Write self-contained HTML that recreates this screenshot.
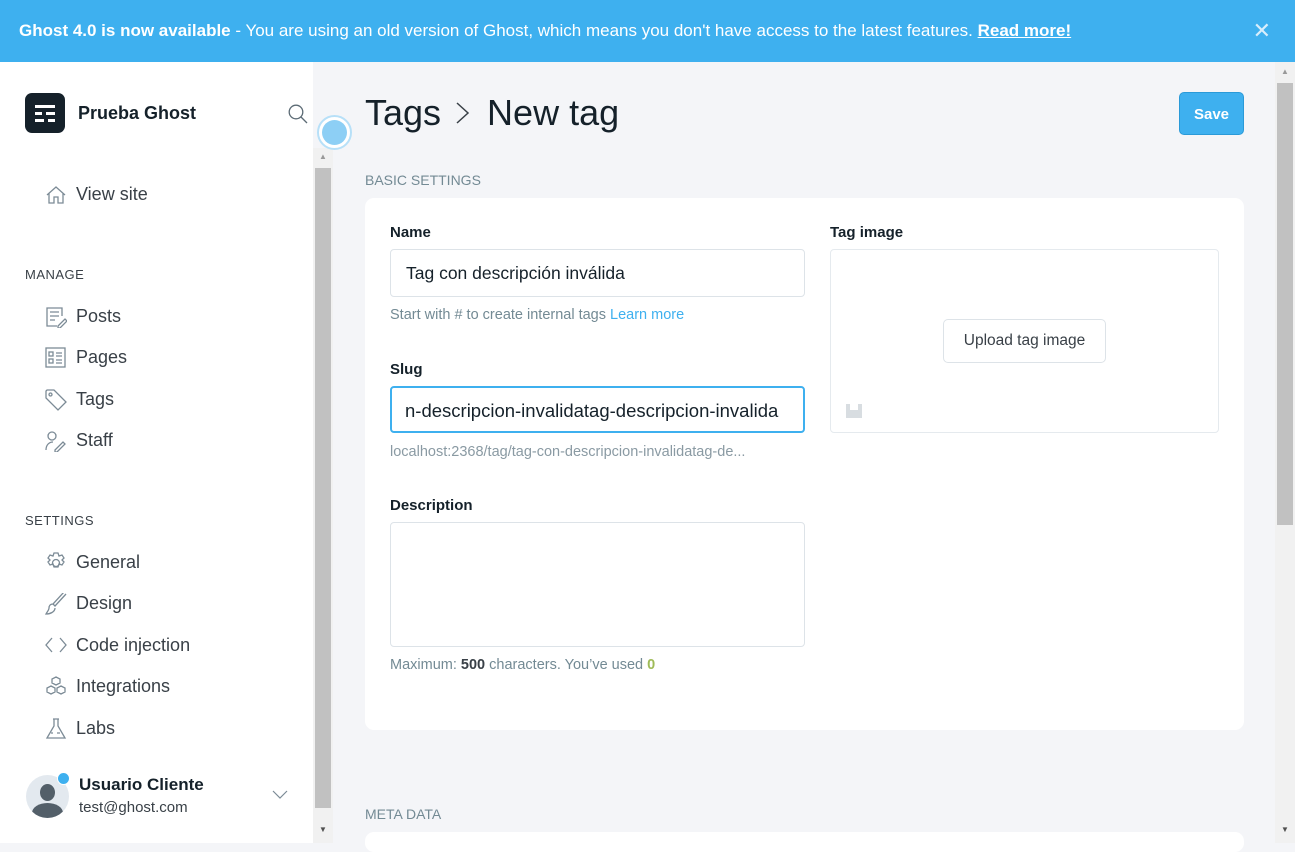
<!DOCTYPE html>
<html><head><meta charset="utf-8"><style>
*{box-sizing:border-box;margin:0;padding:0}
body{width:1295px;height:843px;overflow:hidden;font-family:"Liberation Sans",sans-serif;background:#f4f5f8;position:relative;color:#15212a}
.banner{position:absolute;left:0;top:0;width:1295px;height:62px;background:#3eb0ef;color:#fff;font-size:17px;line-height:62px;padding-left:19px}
.banner b{font-weight:bold}
.banner u{font-weight:bold}
.x{position:absolute;right:24px;top:0;font-size:22px;color:#d8eefc}
.side{position:absolute;left:0;top:62px;width:313px;height:781px;background:#fff}
.sb{position:absolute;left:313px;top:148px;width:20px;height:695px;background:#f1f1f1}
.sb div{position:absolute;left:2px;top:20px;width:16px;height:640px;background:#c1c1c1}
.logo{position:absolute;left:25px;top:93px;width:40px;height:40px;background:#15212a;border-radius:7px}
.logo i{position:absolute;height:3px;background:#fff}
.title{position:absolute;left:78px;top:103px;font-size:18px;font-weight:bold;color:#15212a}
.nav{position:absolute;left:76px;font-size:18px;color:#394047}
.ic{position:absolute;left:45px;width:22px;height:22px}
.hd{position:absolute;left:25px;font-size:13px;color:#394047;letter-spacing:.5px}
.main-h{position:absolute;left:365px;top:92px;font-size:36px;color:#15212a}
.save{position:absolute;left:1179px;top:92px;width:65px;height:43px;background:#3eb0ef;border:1px solid #2a9ad8;border-radius:5px;color:#fff;font-weight:bold;font-size:15px;text-align:center;line-height:43px}
.sec{position:absolute;left:365px;font-size:14px;color:#738a94}
.card{position:absolute;left:365px;top:198px;width:879px;height:532px;background:#fff;border-radius:9px}
.lbl{position:absolute;font-size:15px;font-weight:bold;color:#15212a}
.inp{position:absolute;border:1px solid #dde3e8;border-radius:4px;background:#fff;font-size:17.5px;color:#15212a;padding-left:15px}
.hint{position:absolute;font-size:14.5px;color:#738a94}
.rsb{position:absolute;left:1275px;top:62px;width:20px;height:781px;background:#f1f1f1}
.rsb div{position:absolute;left:2px;top:21px;width:16px;height:442px;background:#c1c1c1}
</style></head><body>
<div class="banner"><b>Ghost 4.0 is now available</b> - You are using an old version of Ghost, which means you don't have access to the latest features. <u>Read more!</u><span class="x">✕</span></div>
<div class="side"></div>
<div class="sb"><div></div><span style="position:absolute;left:6px;top:4px;font-size:8px;color:#999">▲</span><span style="position:absolute;left:6px;top:677px;font-size:8px;color:#505050">▼</span></div>
<div class="logo"><i style="left:10px;top:12px;width:20px"></i><i style="left:10px;top:19px;width:7px"></i><i style="left:21px;top:19px;width:9px"></i><i style="left:10px;top:26px;width:9px"></i><i style="left:23px;top:26px;width:7px"></i></div>
<div class="title">Prueba Ghost</div>
<svg style="position:absolute;left:288px;top:104px" width="20" height="20" fill="none" stroke="#5c6b75" stroke-width="1.3"><circle cx="8" cy="8" r="6.8"/><path d="M13 13L19 19"/></svg>
<div style="position:absolute;left:317px;top:115px;width:35px;height:35px;border-radius:50%;background:#fff;border:2px solid #b7e0f8"></div>
<div style="position:absolute;left:322px;top:120px;width:25px;height:25px;border-radius:50%;background:#8dcff5"></div>
<svg class="ic" style="top:184px" viewBox="0 0 22 22" fill="none" stroke="#7c8b96" stroke-width="1.3"><path d="M2 11L11 3l9 8M4 9v10h5v-6h4v6h5V9"/></svg>
<div class="nav" style="top:184px">View site</div>
<div class="hd" style="top:267px">MANAGE</div>
<svg class="ic" style="top:306px" viewBox="0 0 22 22" fill="none" stroke="#7c8b96" stroke-width="1.3"><path d="M12 20H2V2h15v8M5 6h9M5 10h9M5 14h5M13 20l7-7 2 2-7 7h-2z"/></svg>
<div class="nav" style="top:306px">Posts</div>
<svg class="ic" style="top:347px" viewBox="0 0 22 22" fill="none" stroke="#7c8b96" stroke-width="1.3"><rect x="1" y="1" width="19" height="19"/><rect x="4" y="5" width="4" height="4"/><rect x="4" y="12" width="4" height="4"/><path d="M11 6h6M11 9h6M11 13h6M11 16h6"/></svg>
<div class="nav" style="top:347px">Pages</div>
<svg class="ic" style="top:389px" viewBox="0 0 22 22" fill="none" stroke="#7c8b96" stroke-width="1.3"><path d="M1 2v7l12 12 8-8L9 1H2z"/><circle cx="5.5" cy="5.5" r="1.5"/></svg>
<div class="nav" style="top:389px">Tags</div>
<svg class="ic" style="top:430px" viewBox="0 0 22 22" fill="none" stroke="#7c8b96" stroke-width="1.3"><circle cx="7" cy="6" r="4"/><path d="M1 20c0-5 3-8 7-8M10 20l8-8 2 2-8 8h-2z"/></svg>
<div class="nav" style="top:430px">Staff</div>
<div class="hd" style="top:513px">SETTINGS</div>
<svg class="ic" style="top:552px" viewBox="0 0 22 22" fill="none" stroke="#7c8b96" stroke-width="1.3"><circle cx="11" cy="11" r="3.5"/><path d="M9 1h4l1 3 3-1 2 3-2 2 2 2-2 3-3-1-1 3H9l-1-3-3 1-2-3 2-2-2-2 2-3 3 1z"/></svg>
<div class="nav" style="top:552px">General</div>
<svg class="ic" style="top:593px" viewBox="0 0 22 22" fill="none" stroke="#7c8b96" stroke-width="1.3"><path d="M21 1L10 13l-2-2L19-1M8 11c-3 0-4 2-4 4s-2 4-3 6c4 0 9-2 9-6"/></svg>
<div class="nav" style="top:593px">Design</div>
<svg class="ic" style="top:635px" viewBox="0 0 22 22" fill="none" stroke="#7c8b96" stroke-width="1.3"><path d="M7 3L1 10l6 7M15 3l6 7-6 7"/></svg>
<div class="nav" style="top:635px">Code injection</div>
<svg class="ic" style="top:676px" viewBox="0 0 22 22" fill="none" stroke="#7c8b96" stroke-width="1.3"><path d="M11 1l4 2v4l-4 2-4-2V3zM6 10l4 2v4l-4 2-4-2v-4zM16 10l4 2v4l-4 2-4-2v-4z"/></svg>
<div class="nav" style="top:676px">Integrations</div>
<svg class="ic" style="top:718px" viewBox="0 0 22 22" fill="none" stroke="#7c8b96" stroke-width="1.3"><path d="M8 1h6M9 1v7L2 20h18L13 8V1M6 15h2M12 15h3"/></svg>
<div class="nav" style="top:718px">Labs</div>
<div style="position:absolute;left:26px;top:775px;width:43px;height:43px;border-radius:50%;background:#e3e9ef;overflow:hidden"><div style="position:absolute;left:14px;top:9px;width:15px;height:17px;border-radius:50%;background:#535f69"></div><div style="position:absolute;left:6px;top:28px;width:31px;height:20px;border-radius:50% 50% 0 0;background:#535f69"></div></div>
<div style="position:absolute;left:57px;top:772px;width:13px;height:13px;border-radius:50%;background:#3eb0ef;border:1px solid #fff"></div>
<div style="position:absolute;left:79px;top:775px;font-size:17px;font-weight:bold;color:#15212a">Usuario Cliente</div>
<div style="position:absolute;left:79px;top:799px;font-size:15px;color:#394047">test@ghost.com</div>
<svg style="position:absolute;left:272px;top:790px" width="16" height="10" fill="none" stroke="#7c8b96" stroke-width="1.2"><path d="M1 1l7 7 7-7"/></svg>
<div class="main-h">Tags<span style="display:inline-block;width:46px;position:relative"><svg style="position:absolute;left:14px;top:-24px" width="16" height="24" fill="none" stroke="#394047" stroke-width="1.5"><path d="M2 2l11 10-11 10"/></svg></span>New tag</div>
<div class="save">Save</div>
<div class="sec" style="top:172px">BASIC SETTINGS</div>
<div class="card"></div>
<div class="lbl" style="left:390px;top:224px">Name</div>
<div class="inp" style="left:390px;top:249px;width:415px;height:48px;line-height:46px">Tag con descripción inválida</div>
<div class="hint" style="left:390px;top:307px">Start with # to create internal tags <span style="color:#3eb0ef">Learn more</span></div>
<div class="lbl" style="left:390px;top:361px">Slug</div>
<div class="inp" style="left:390px;top:386px;width:415px;height:47px;line-height:45px;border:2px solid #3eb0ef;padding-left:13px;overflow:hidden;white-space:nowrap;font-size:18.5px">n-descripcion-invalidatag-descripcion-invalida</div>
<div class="hint" style="left:390px;top:444px;color:#8a9aa3">localhost:2368/tag/tag-con-descripcion-invalidatag-de...</div>
<div class="lbl" style="left:390px;top:497px">Description</div>
<div class="inp" style="left:390px;top:522px;width:415px;height:125px"></div>
<div class="hint" style="left:390px;top:657px">Maximum: <b style="color:#394047">500</b> characters. You’ve used <b style="color:#9fbb58">0</b></div>
<div class="lbl" style="left:830px;top:224px">Tag image</div>
<div style="position:absolute;left:830px;top:249px;width:389px;height:184px;border:1px solid #e5eaee;border-radius:4px"></div>
<div style="position:absolute;left:943px;top:319px;width:163px;height:44px;border:1px solid #dde3e8;border-radius:5px;background:#fff;font-size:15.5px;color:#394047;text-align:center;line-height:42px">Upload tag image</div>
<div style="position:absolute;left:846px;top:404px;width:16px;height:14px;background:#d8dde1"></div><div style="position:absolute;left:850px;top:404px;width:8px;height:6px;background:#fff"></div>
<div class="sec" style="top:806px">META DATA</div>
<div style="position:absolute;left:365px;top:832px;width:879px;height:20px;background:#fff;border-radius:9px"></div>
<div class="rsb"><div></div><span style="position:absolute;left:6px;top:5px;font-size:8px;color:#999">▲</span><span style="position:absolute;left:6px;top:763px;font-size:8px;color:#505050">▼</span></div>
</body></html>
